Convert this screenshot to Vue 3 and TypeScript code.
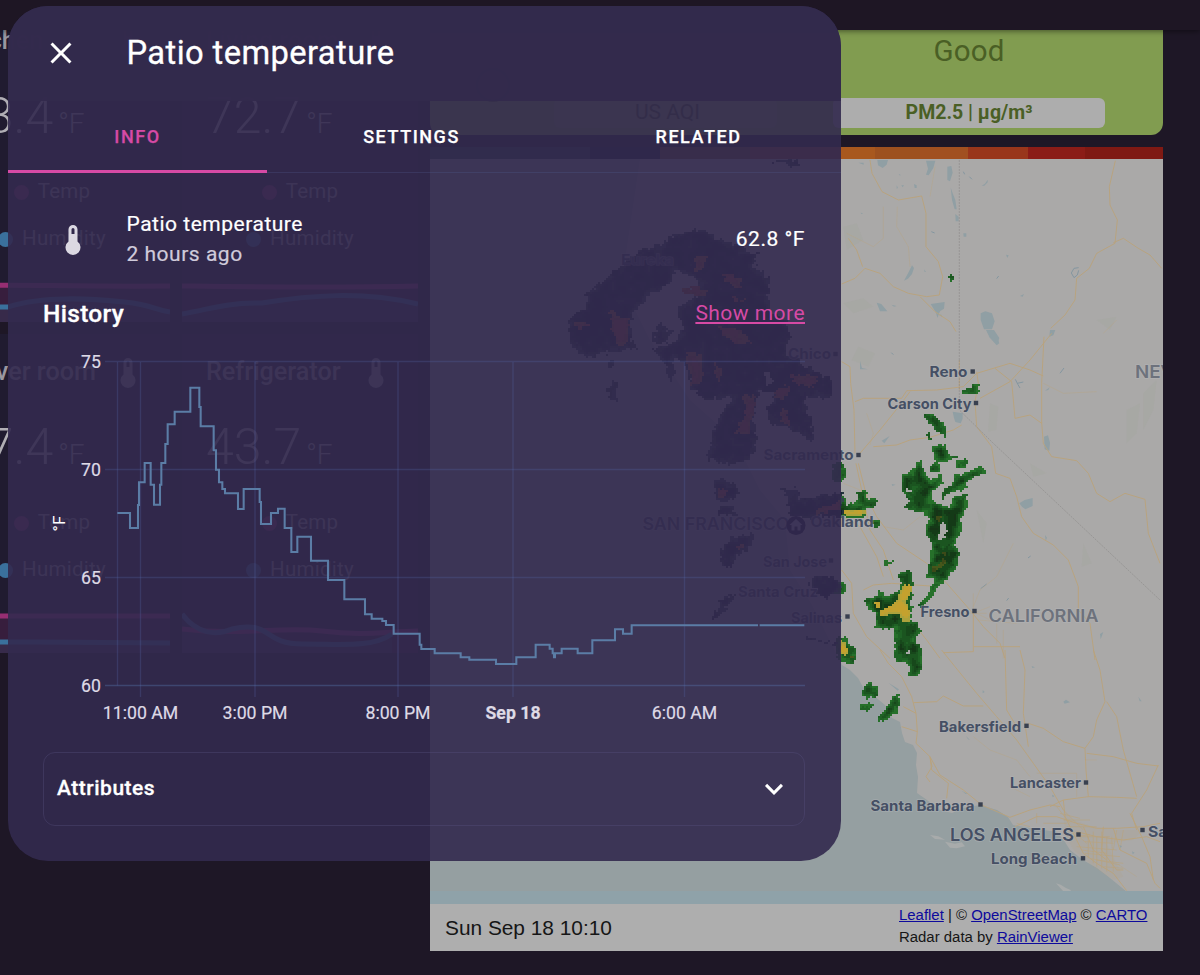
<script setup lang="ts">
type Point = [number, number]

interface Shade {
  fill: string
  d: string
}

interface SensorCard {
  title: string
  value: string
  temp: string
  humidity: string
}

interface Place {
  name: string
  x: number
  y: number
  width: number
  kind?: string
  dot?: Point
}

const cards: SensorCard[] = [
  { title: 'Kitchen', value: '73.4', temp: 'M0 24C60 20 120 24 236 23', humidity: 'M0 44H74C110 32 160 36 190 39S220 47 236 49' },
  { title: 'Living room', value: '72.7', temp: 'M0 23C80 24 150 25 236 23', humidity: 'M0 51C30 46 40 40 80 40C130 32 180 28 236 41' },
  { title: 'Server room', value: '77.4', temp: 'M0 22H236', humidity: 'M0 48C90 48 130 48 236 49' },
  { title: 'Refrigerator', value: '43.7', temp: 'M0 35C60 42 100 32 140 37S200 38 236 37', humidity: 'M0 20C15 40 34 42 50 35C90 26 80 50 120 50C160 50 190 54 210 40' },
]

const tabs = [
  { label: 'Info', active: true },
  { label: 'Settings', active: false },
  { label: 'Related', active: false },
]

const yTicks = [
  { label: '75', y: 362 },
  { label: '70', y: 470 },
  { label: '65', y: 578 },
  { label: '60', y: 686 },
]

const xTicks = [
  { label: '11:00 AM', x: 140.5, bold: false },
  { label: '3:00 PM', x: 255, bold: false },
  { label: '8:00 PM', x: 398, bold: false },
  { label: 'Sep 18', x: 513, bold: true },
  { label: '6:00 AM', x: 684.5, bold: false },
]

const historyLine =
  'M352 504H390V549H414V480H417V412H434V354H452V419H462V479H480V419H484V354H496V297H503V238H524V200H571V128H598V186H602V244H641V316H648V374H657V412H667V432H675V445H714V492H731V432H779V471H783V537H813V504H834V491H854V549H874V621H892V575H933V647H984V705H1033V763H1095V808H1115V821H1147V828H1158V840H1181V866H1259V899H1264V912H1304V925H1382V937H1408V944H1488V957H1549V937H1607V899H1649V911H1658V925H1662V937H1665V925H1685V911H1733V925H1777V886H1845V853H1869V866H1895V841H2274M2279 841H2413'

const places: Place[] = [
  { name: 'Eureka', x: 621, y: 265, width: 53 },
  { name: 'Chico', x: 788, y: 359, width: 43, dot: [835.5, 354] },
  { name: 'Reno', x: 929.5, y: 376.5, width: 38, dot: [972.7, 371.5] },
  { name: 'Carson City', x: 887.5, y: 408.5, width: 84, dot: [976, 403] },
  { name: 'Sacramento', x: 763.5, y: 460, width: 90, dot: [858.5, 455] },
  { name: 'Oakland', x: 810.5, y: 527, width: 63 },
  { name: 'San Jose', x: 763, y: 566.5, width: 64, dot: [831, 560.5] },
  { name: 'Santa Cruz', x: 738, y: 597, width: 80 },
  { name: 'Salinas', x: 791, y: 623, width: 51, dot: [847.5, 616.5] },
  { name: 'Fresno', x: 920.5, y: 616.5, width: 49, dot: [974.5, 611] },
  { name: 'Bakersfield', x: 939, y: 732, width: 82, dot: [1026.5, 725.8] },
  { name: 'Lancaster', x: 1010, y: 787.5, width: 71, dot: [1086, 782.5] },
  { name: 'Santa Barbara', x: 870.5, y: 810.5, width: 104, dot: [980.5, 804.5] },
  { name: 'Long Beach', x: 991, y: 864, width: 86, dot: [1083, 858.3] },
  { name: 'San Bernardino', x: 1148, y: 836.5, width: 118, dot: [1142.5, 830] },
  { name: 'SAN FRANCISCO', x: 642.5, y: 530, width: 147, kind: 'big' },
  { name: 'LOS ANGELES', x: 950, y: 841, width: 124, kind: 'big', dot: [1078.5, 834.5] },
  { name: 'CALIFORNIA', x: 988.5, y: 621.7, width: 110, kind: 'state' },
  { name: 'NEVADA', x: 1135, y: 378, width: 78, kind: 'state' },
]

const CELL = 2

function parse(list: string, ox: number, oy: number): Point[] {
  return list.split(' ').map((pair) => {
    const [x, y] = pair.split(',').map(Number)
    return [ox + x / 3, oy + y / 3] as Point
  })
}

function hash(x: number, y: number): number {
  const n = Math.sin(x * 127.1 + y * 311.7) * 43758.5453
  return n - Math.floor(n)
}

function smooth(x: number, y: number): number {
  const ix = Math.floor(x)
  const iy = Math.floor(y)
  const fx = x - ix
  const fy = y - iy
  const top = hash(ix, iy) * (1 - fx) + hash(ix + 1, iy) * fx
  const bottom = hash(ix, iy + 1) * (1 - fx) + hash(ix + 1, iy + 1) * fx
  return top * (1 - fy) + bottom * fy
}

function inside(poly: Point[], x: number, y: number): boolean {
  let hit = false
  for (let i = 0, j = poly.length - 1; i < poly.length; j = i++) {
    const [xi, yi] = poly[i]
    const [xj, yj] = poly[j]
    if (yi > y !== yj > y && x < ((xj - xi) * (y - yi)) / (yj - yi) + xi) hit = !hit
  }
  return hit
}

function edgeDistance(poly: Point[], x: number, y: number): number {
  let best = Infinity
  for (let i = 0, j = poly.length - 1; i < poly.length; j = i++) {
    const [x1, y1] = poly[j]
    const [x2, y2] = poly[i]
    const dx = x2 - x1
    const dy = y2 - y1
    const t = Math.max(0, Math.min(1, ((x - x1) * dx + (y - y1) * dy) / (dx * dx + dy * dy || 1)))
    best = Math.min(best, Math.hypot(x - x1 - t * dx, y - y1 - t * dy))
  }
  return best
}

// Turns echo outlines into blocky radar cells, darker towards the core.
function radar(polys: Point[][], fills: string[], jitter: number, holes: Point[][] = []): Shade[] {
  const shades: Shade[] = fills.map((fill) => ({ fill, d: '' }))
  for (const poly of polys) {
    const xs = poly.map((p) => p[0])
    const ys = poly.map((p) => p[1])
    const x0 = Math.floor(Math.min(...xs) / CELL) * CELL - 4
    const y0 = Math.floor(Math.min(...ys) / CELL) * CELL - 4
    for (let y = y0; y < Math.max(...ys) + 4; y += CELL) {
      for (let x = x0; x < Math.max(...xs) + 4; x += CELL) {
        const px = x + 1 + (smooth(x / 3, y / 3) - 0.5) * jitter
        const py = y + 1 + (smooth(x / 3 + 40, y / 3 + 9) - 0.5) * jitter
        if (!inside(poly, px, py) || holes.some((h) => inside(h, px, py))) continue
        const depth = Math.min(edgeDistance(poly, px, py), 6) + (smooth(x / 6, y / 6) - 0.4) * 8
        const level = Math.max(0, Math.min(fills.length - 1, Math.floor(depth / 2)))
        shades[level].d += `M${x} ${y}h2v2h-2z`
      }
    }
  }
  return shades
}

const east = (list: string) => parse(list, 830, 330)
const north = (list: string) => parse(list, 420, 0)

const rain = radar(
  [
    '213,440 240,423 272,390 284,430 302,452 330,430 338,462 310,484 300,508 335,526 358,530 370,500 414,488 410,530 395,560 392,600 372,650 390,670 377,715 347,752 320,772 307,802 277,832 263,828 286,800 300,772 316,752 293,744 298,690 303,640 283,600 298,570 278,547 220,534 238,510 211,480',
    '310,343 347,346 352,370 382,378 347,394 314,404',
    '301,406 332,400 328,426 302,428',
    '376,396 414,384 407,414 382,418',
    '331,500 341,475 368,465 373,435 398,430 453,408 465,430 427,442 397,480 365,482 342,503',
    '277,252 309,250 334,275 351,298 346,322 314,294 295,276',
    '290,313 304,310 306,327 292,332',
    '395,182 425,176 425,163 444,163 444,193 398,193',
    '160,690 190,692 186,706 166,704',
    '0,498 42,498 50,523 83,518 83,486 107,482 112,506 149,508 132,532 102,542 108,562 60,564 0,557',
    '126,566 156,580 136,596',
    '203,733 242,718 247,790 242,870 264,876 274,905 257,930 274,950 275,1020 264,1036 233,1036 240,1010 213,994 198,988 193,935 196,897 160,894 133,894 138,852 116,840 106,810 133,798 150,780 167,798 200,788 213,762',
    '20,918 50,928 62,953 76,955 74,995 50,1004 20,987',
    '118,1056 142,1073 142,1102 112,1108 95,1087 102,1068',
    '91,1123 134,1116 112,1142 93,1142',
    '191,1093 210,1088 204,1145 167,1172 148,1175 151,1145 178,1122',
    '10,398 42,398 49,430 40,454 10,452',
    '10,758 40,758 48,778 38,792 10,792',
    '353,-168 366,-168 371,-150 360,-148',
  ].map(east),
  ['#26702a', '#1f6225', '#1b5520', '#17481b', '#143a17', '#163417'],
  3.6,
  [east('325,600 345,575 352,600 340,632 328,626'), east('228,478 246,474 246,490 232,490'), east('230,965 240,962 240,972 232,974')],
)

const heavy = radar(
  [
    '222,763 245,766 238,800 227,815 242,850 238,877 214,874 208,852 153,858 148,840 188,823 203,808 213,780',
    '133,814 154,820 152,834 136,832',
    '0,538 108,540 104,554 0,556',
    '30,930 46,940 58,970 42,982 28,962',
  ].map(east),
  ['#aba23c', '#bda232', '#c4a12e'],
  2,
)

const cores = radar(
  ['303,718 325,700 343,688 354,698 330,710 310,728', '316,558 334,562 328,576', '328,662 354,668 344,676', '58,973 70,978 62,988'].map(east),
  ['#46571b', '#3c4a18'],
  4,
)

const coastRain = radar(
  [
    '600,800 660,750 720,735 745,715 800,700 850,685 890,715 960,740 1015,765 1000,800 1050,835 1045,890 1050,940 1100,960 1110,1010 1100,1060 1180,1110 1240,1140 1235,1190 1180,1190 1150,1190 1180,1280 1182,1328 1120,1290 1060,1275 1042,1240 1060,1180 1020,1170 1000,1250 1010,1300 1000,1370 930,1395 865,1375 880,1290 900,1240 950,1190 860,1200 820,1170 790,1080 760,1075 765,1130 750,1150 735,1100 700,1050 770,1020 790,980 770,920 840,890 830,840 770,810 740,870 690,880 680,900 640,940 630,1010 650,1045 550,1060 500,1075 455,1035 445,975 460,940 495,930 500,880 560,830',
    '720,970 760,1000 730,1030 690,1020',
    '560,1080 588,1085 585,1105 565,1100',
    '580,1140 590,1150 590,1195 600,1205 565,1195 570,1165',
    '885,1445 905,1435 952,1455 950,1490 915,1505 885,1490',
    '900,1520 945,1515 950,1545 895,1545',
    '905,1650 930,1615 1005,1598 985,1650 945,1670 930,1708 905,1700',
    '1070,1465 1120,1475 1130,1460 1145,1500 1200,1490 1265,1480 1265,1550 1200,1550 1140,1555 1110,1540 1105,1490',
    '1165,1750 1185,1725 1250,1735 1265,1760 1220,1800 1190,1770',
    '875,1860 900,1805 945,1780 935,1810 905,1835 885,1860',
    '1140,1910 1250,1930 1250,1936 1150,1916',
    '1060,480 1140,480 1135,498 1105,498 1060,486',
  ].map(north),
  ['#33474c', '#22343c', '#182834', '#12202e', '#0e1a2a'],
  6,
  [north('1035,1125 1050,1110 1060,1140 1045,1160'), north('720,860 750,850 745,880 725,885'), north('655,990 675,970 680,1010 660,1020')],
)

const coastHeavy = radar(
  [
    '820,770 860,770 850,805 830,810',
    '905,820 960,835 965,870 920,850',
    '780,870 830,860 880,875 820,890',
    '570,920 590,950 630,960 620,1035 590,1035 575,980',
    '460,960 510,970 480,995',
    '890,980 950,985 1000,1030 940,1030',
    '800,1060 850,1065 840,1160 815,1150',
    '880,1090 905,1115 900,1150 885,1130',
    '970,1180 1005,1190 1000,1240 990,1300 940,1305 975,1250',
    '1060,1175 1110,1155 1110,1190 1070,1200',
    '1110,1125 1200,1130 1180,1160 1120,1150',
    '890,1470 925,1465 915,1490 895,1485',
    '945,1640 970,1630 960,1650',
    '1185,1535 1260,1500 1260,1530 1190,1545',
    '1080,1230 1100,1225 1110,1280 1090,1270',
    '935,890 990,905 950,905',
  ].map(north),
  ['#a8642c', '#a05030', '#b04a34'],
  5,
)

const layers = [rain, cores, heavy, coastRain, coastHeavy].flat()
</script>

<template>
  <div class="screen">
    <div class="board">
      <section class="cards">
        <article v-for="card in cards" :key="card.title" class="card">
          <header class="card-head">
            <span>{{ card.title }}</span>
            <svg class="card-icon" viewBox="0 0 24 24">
              <path d="M15 13V5A3 3 0 0 0 9 5V13A5 5 0 1 0 15 13M12 4A1 1 0 0 1 13 5V8H11V5A1 1 0 0 1 12 4Z" />
            </svg>
          </header>
          <div class="card-value">{{ card.value }}<small>°F</small></div>
          <div class="legend"><i class="dot pink"></i>Temp</div>
          <div class="legend"><i class="dot blue"></i>Humidity</div>
          <svg class="spark" viewBox="0 0 236 59">
            <path :d="card.temp + 'V59H0Z'" class="area-pink" />
            <path :d="card.humidity + 'V59H0Z'" class="area-blue" />
            <path :d="card.temp" class="line-pink" />
            <path :d="card.humidity" class="line-blue" />
          </svg>
        </article>
      </section>

      <section class="right">
        <article class="air">
          <svg class="gauge" viewBox="0 0 40 40"><circle cx="20" cy="20" r="16" /></svg>
          <div class="air-status">Good</div>
          <div class="air-index">US AQI</div>
          <div class="air-unit">PM2.5 | µg/m³</div>
        </article>

        <article class="radar">
          <div class="scale"></div>
          <svg class="map" viewBox="430 159 733 732">
            <rect x="430" y="159" width="733" height="732" class="land" />
            <path
              class="sea"
              d="M430 159H640L625 260L630 300L650 340L690 400L735 440L760 490L785 520L790 570L812 605L842 665L850 670L858 678L863 687L873 695L885 705L892 718L900 722L902 733L905 742L913 745L917 753L916 765L918 777L917 793L927 800L940 810L952 813L963 808L980 805L997 810L1008 817L1013 825L1030 828L1057 832L1065 842L1070 850L1083 860L1097 868L1110 878L1127 892H430Z"
            />
            <g transform="translate(830 0) scale(.33333)">
              <path class="park" d="M40 680l40 -10 20 50 -50 30zM40 910l60 -15 30 25 -60 20zM800 960l60 -10 -20 40z" />
              <path
                class="lake"
                d="M142 480h32l-4 14 -12 10 -14 -8zM288 482h28l-6 22 -14 22 -8 -2 6 -18zM352 500l12 -2 4 20 -8 26 -8 -4zM362 562l6 18 8 20 4 28h-6l-8 -28zM376 642l10 8v14h-9zM246 796l6 8 -6 18 -12 14 -12 6 14 -26zM140 908l14 4 18 22 -22 0zM302 912l42 -6 -2 20 -12 8 -8 20 -4 -16zM452 940l14 -6 20 6 8 24 -8 24h-24l-10 -28zM470 990l30 15 8 25 -8 6 -22 -24zM400 700l9 0v10h-8zM252 552l8 4v8h-6zM570 888l12 -6 -4 8zM528 764l8 2 -4 8zM455 557l10 -6 8 -12v8l-10 10zM85 488h16v6zM206 522l8 4 -6 0zM200 556l4 8 -4 2zM214 556l8 0 -4 6zM92 638l8 2 -6 2zM184 914l16 4 -8 2zM322 942l12 2 4 8zM282 808l6 8 -4 0z"
              />
              <path class="lake-line" d="M746 803l-14 2 -8 14 8 14 10 -8 4 -14M400 515l4 8M418 530l8 8M500 836l6 -8M304 695l10 4" />
              <path
                class="road"
                d="M120 480L126 520 156 575 205 600 275 588 288 640V740L325 785 338 830 328 885 290 890 235 880 190 860 150 820 105 805 75 835 35 852M55 715L80 750 98 800M270 890L315 935 360 965 378 995M856 482L838 560 840 615 862 660 855 730 800 760 778 805 740 835 735 900 705 945 662 985M850 728L880 715 925 745 960 765 995 805"
              />
              <path class="road faint" d="M160 620V715L130 740 50 700M315 500L300 590M202 620L200 680 235 740 240 800M860 960L820 1000" />
              <path class="border" d="M388 480V1080" />
            </g>
            <g transform="translate(830 330) scale(.33333)">
              <path
                class="park"
                d="M480 220l25 10 -6 70 -25 5zM890 240l40 -20 -10 90 -30 30zM940 190l40 -40 -10 90 -30 60zM85 50l50 20 -20 40 -50 -20zM600 400l50 30 -40 10zM760 640l25 60 -30 10zM440 540l30 40 -10 60z"
              />
              <path
                class="lake"
                d="M468 0h24l16 24 -4 12 -30 -24zM660 0h16l-6 16 -12 4zM368 245l30 5v16l-6 14 -16 -4 -4 -12zM642 320l12 -4 6 22 -2 24 -14 -4zM568 520l16 -10 24 -6v24l-22 10 -10 -8zM155 332l24 -14 -16 22zM645 182l14 -10 -4 8zM645 615l6 8 -4 10zM810 912l10 -6 -8 22zM90 92l6 22 18 4 -24 0zM185 462l12 2 -10 4z"
              />
              <path class="lake-line" d="M556 148l8 16 6 10M562 160l18 -4M690 130l12 -16M452 776l18 -14M530 812l6 -8M594 684l8 -6M184 68l6 6" />
              <path
                class="road"
                d="M388 90V180M35 95L60 110 62 160 72 240 75 370M75 215L100 205 215 205 230 182 320 180 400 170 440 130 540 100 600 120 640 138M90 370L150 300 210 225 240 185M130 350L200 345 240 330 300 322 370 300 395 285M440 125L445 160 435 215 440 290 485 350 497 430 540 445 560 500 575 560 610 610 670 645 715 690 745 770V840L780 880 795 990M450 205L540 155 600 90 665 10M495 115L545 155 555 265 600 255 635 280V160L642 20M635 278L640 340 665 380 740 392 775 430 800 490 840 515 885 490 945 508 955 610 990 700M85 400L110 500 140 560 200 640 290 700 350 760 420 840 460 890 510 940 525 985M78 400L95 480 120 600 160 660 190 750M100 780L130 765 185 760 300 768M430 850V965L340 968M432 950H570M250 880L290 930 330 985M35 720L65 760 70 850 110 920 180 985M40 560L90 590 140 680 160 740"
              />
              <path class="road faint" d="M110 250L130 310 120 345M40 460L90 480 150 520M160 590L220 600 270 560M550 640L500 740 450 780 430 830M440 850L480 870M640 160L700 190 800 185M445 870L560 880M430 790V850L480 830M500 880V940M520 900V985M400 850H470" />
              <path class="border" d="M388 90V240L490 340 990 810" />
            </g>
            <g transform="translate(830 650) scale(.33333)">
              <path class="island" d="M300 555l25 4 20 10 -30 -2zM345 575l30 6 20 -4 10 12 -25 6 -20 -2zM678 700l14 4 16 10 14 6v6l-20 0z" />
              <path class="city" d="M700 480l30 30 60 20 60 10 90 0 -30 30 -80 10 30 60 20 40 -30 10 -60 -40 -60 -50 -25 -45z" />
              <path
                class="road"
                d="M150 0L175 40 215 80 245 140 258 190 262 245 258 280 300 320 305 360 355 400 350 445M300 320L330 375 400 420 455 465 540 502 600 480 660 465 690 470M300 320L306 350 288 380 300 396M258 190L220 170M262 245L215 230M250 158L320 155 340 138 400 168H460M335 0L375 50 440 130 500 200 560 270 610 340 660 410 700 480M525 0L530 180 560 230M570 0L585 60 580 190 595 290M595 220L640 235 700 275 765 295 790 260 800 210 825 155 810 60 790 0M765 295L768 360 775 440 700 450 660 470M770 310L850 320 920 340 985 348M830 155L860 200 880 300 900 370 920 440M985 345L950 420 905 490 920 540M775 440L860 442 920 445M555 530L620 500 680 500 740 520 800 535 860 535 940 530 990 520M700 450L705 500 735 560 760 610 800 640 850 670 890 722M740 545L800 560 880 570 950 560 990 575M760 530L790 600 830 630M820 530L815 600 860 660 880 660M850 535L870 600 950 640 975 700 990 715M900 490L935 560 960 620 970 690"
              />
              <path
                class="road street"
                d="M700 480L760 540M640 520L710 520M720 560L780 555M740 590L860 600M780 625L870 645M800 560V650M845 560L850 665M680 470L720 520M690 490L750 505M700 510H780M710 530H800M730 545L770 580M750 560H840M765 575L850 580M755 600L830 610M775 560V625M790 545V640M815 545V655M830 560V665M765 610L870 620M800 630L880 640M820 650L880 655M860 540L850 600M880 540L870 600M620 490V520M600 530L560 520"
              />
              <path class="road faint" d="M620 370H740V440M765 330H800M480 300L560 330 600 380M860 640L920 680M540 410L600 440M430 260L480 300" />
              <path class="lake" d="M700 155l8 -6 12 8 -16 4zM458 120l6 6 -6 4zM925 140l10 14 -6 0zM175 98l32 20 -4 4zM605 48l10 4 -8 2zM408 258l12 12 -6 -2zM906 604l8 4 -6 5zM666 434l8 4 -6 4zM868 586l8 2 -4 6zM395 422l18 10 -6 0z" />
            </g>
            <g shape-rendering="crispEdges">
              <path v-for="(layer, i) in layers" :key="i" :d="layer.d" :fill="layer.fill" />
            </g>
            <g v-for="place in places" :key="place.name">
              <text
                :x="place.x"
                :y="place.y"
                :textLength="place.width"
                lengthAdjust="spacingAndGlyphs"
                class="place"
                :class="place.kind"
              >{{ place.name }}</text>
              <rect v-if="place.dot" :x="place.dot[0] - 2.2" :y="place.dot[1] - 2.2" width="4.4" height="4.4" class="place-dot" />
            </g>
            <circle cx="796" cy="525.5" r="9.5" class="home-disc" />
            <path d="M796 519l-6.500 6h2v5.500h3v-4h3v4h3v-5.500h2z" class="home" />
          </svg>
          <div class="map-edge"></div>
          <footer class="map-foot">
            <span class="stamp">Sun Sep 18 10:10</span>
            <div class="credits">
              <div><a>Leaflet</a> | © <a>OpenStreetMap</a> © <a>CARTO</a></div>
              <div>Radar data by <a>RainViewer</a></div>
            </div>
          </footer>
        </article>
      </section>
    </div>

    <div class="appbar"></div>

    <div class="dialog" role="dialog">
      <header class="dialog-head">
        <svg class="close" viewBox="0 0 24 24">
          <path d="M19 6.410L17.590 5L12 10.590L6.410 5L5 6.410L10.590 12L5 17.590L6.410 19L12 13.410L17.590 19L19 17.590L13.410 12L19 6.410Z" />
        </svg>
        <h1>Patio temperature</h1>
      </header>
      <nav class="tabs">
        <button v-for="tab in tabs" :key="tab.label" class="tab" :class="{ active: tab.active }">{{ tab.label }}</button>
      </nav>
      <div class="body">
        <div class="state">
          <svg class="state-icon" viewBox="0 0 24 24">
            <path d="M15 13V5A3 3 0 0 0 9 5V13A5 5 0 1 0 15 13M12 4A1 1 0 0 1 13 5V8H11V5A1 1 0 0 1 12 4Z" />
          </svg>
          <div class="state-text">
            <div>Patio temperature</div>
            <div class="ago">2 hours ago</div>
          </div>
          <div class="reading">62.8 °F</div>
        </div>
        <div class="history-head">
          <h2>History</h2>
          <a class="more">Show more</a>
        </div>
        <svg class="chart" viewBox="43 345 762 385">
          <g class="grid">
            <path d="M117.500 362V685.500" />
            <path v-for="t in xTicks" :key="t.label" :d="`M${t.x} 362V697`" />
            <path v-for="t in yTicks" :key="t.label" :d="`M105 ${t.y - 0.500}H805`" :class="{ base: t.label === '60' }" />
          </g>
          <text v-for="t in yTicks" :key="t.label" x="101" :y="t.y + 6" class="tick end">{{ t.label }}</text>
          <text v-for="t in xTicks" :key="t.label" :x="t.x" y="719" class="tick mid" :class="{ bold: t.bold }">{{ t.label }}</text>
          <text transform="translate(65 523.500) rotate(-90)" class="unit">°F</text>
          <path :d="historyLine" transform="translate(0 345) scale(.33333)" class="history-line" />
        </svg>
        <div class="attributes">
          <span>Attributes</span>
          <svg class="chevron" viewBox="0 0 24 24"><path d="M7.410 8.580L12 13.170L16.590 8.580L18 10L12 16L6 10L7.410 8.580Z" /></svg>
        </div>
      </div>
    </div>
  </div>
</template>

<style>
body {
  margin: 0;
  background: #1e1726;
}
</style>

<style scoped>
.screen {
  position: relative;
  width: 1200px;
  height: 975px;
  overflow: hidden;
  background: #1e1726;
  font-family: Roboto, sans-serif;
}
.board {
  display: flex;
  gap: 12px;
  margin-left: -66px;
  padding-top: 3px;
}
.cards {
  display: grid;
  grid-template-columns: 236px 236px;
  grid-auto-rows: 319px;
  gap: 12px;
  align-content: start;
  flex: none;
}
.card {
  display: flex;
  flex-direction: column;
  background: #201b30;
  color: #9a97a0;
  overflow: hidden;
}
.card-head {
  display: flex;
  justify-content: space-between;
  align-items: center;
  height: 28px;
  padding: 23px 24px 0;
  font-size: 25.200px;
  font-weight: 500;
  white-space: nowrap;
}
.card-icon {
  width: 36px;
  height: 36px;
  margin-top: 4px;
  fill: currentColor;
}
.card-value {
  height: 63px;
  padding: 28px 24px 0;
  margin-top: 4px;
  font-size: 50px;
  line-height: 60px;
  font-weight: 300;
  color: #b0aeb4;
}
.card-value small {
  margin-left: 5px;
  font-size: 28px;
}
.legend {
  display: flex;
  justify-content: center;
  align-items: center;
  gap: 9px;
  height: 47px;
  font-size: 20.500px;
  letter-spacing: 0.25px;
}
.legend:nth-of-type(2) {
  margin-top: 18px;
}
.dot {
  width: 15px;
  height: 15px;
  margin-top: 3px;
  border-radius: 50%;
}
.dot.pink {
  background: #7e2a62;
}
.dot.blue {
  background: #3a709c;
}
.spark {
  display: block;
  width: 236px;
  height: 59px;
  margin-top: auto;
}
.line-pink,
.line-blue {
  fill: none;
  stroke-width: 5;
}
.line-pink {
  stroke: #962e72;
}
.line-blue {
  stroke: #3a709c;
}
.area-pink {
  fill: #962e72;
  opacity: 0.2;
}
.area-blue {
  fill: #3a709c;
  opacity: 0.15;
}
.right {
  width: 733px;
  flex: none;
}
.air {
  display: grid;
  grid-template-columns: 124px 223px 56px 272px;
  grid-template-rows: 95px 30px;
  height: 132px;
  border-radius: 0 0 12px 12px;
  background: #819c50;
  color: #4a5f25;
  text-align: center;
}
.gauge {
  width: 40px;
  height: 40px;
  margin: 62px 0 0 43px;
  fill: none;
  stroke: #4a5f25;
  stroke-width: 2;
}
.air-status {
  grid-column: 4;
  grid-row: 1;
  padding-top: 30px;
  font-size: 29.500px;
  line-height: 36px;
  letter-spacing: 0.1px;
}
.air-index,
.air-unit {
  grid-row: 2;
  border-radius: 6px;
}
.air-index {
  grid-column: 2;
  padding-left: 4px;
  background: #869c60;
  color: #3a4c1c;
  font-size: 21px;
  line-height: 29px;
}
.air-unit {
  grid-column: 4;
  background: #adadad;
  font-size: 19.500px;
  font-weight: 700;
  line-height: 29px;
}
.radar {
  margin-top: 12px;
  background: #aeaeae;
}
.scale {
  height: 12px;
  background: linear-gradient(
    90deg,
    #28463e 0 90px,
    #223c40 90px 160px,
    #10182c 160px 230px,
    #705030 230px 320px,
    #86402c 320px 411px,
    #a8581e 411px 445px,
    #9d511f 445px 490px,
    #a15020 490px 538px,
    #99361b 538px 598px,
    #8b1c17 598px 655px,
    #7f1913 655px
  );
}
.map {
  display: block;
  width: 733px;
  height: 732px;
}
.land {
  fill: #aaa9a8;
}
.sea {
  fill: #959fa1;
}
.park {
  fill: #a1a49a;
  opacity: 0.3;
}
.lake {
  fill: #909fa4;
}
.lake-line {
  fill: none;
  stroke: #8496a0;
  stroke-width: 3;
}
.island {
  fill: #a8abab;
}
.city {
  fill: #b7a27c;
  opacity: 0.15;
}
.road {
  fill: none;
  stroke: #b9a27c;
  stroke-width: 2.800;
  stroke-linejoin: round;
}
.street {
  stroke-width: 1.800;
}
.faint {
  opacity: 0.4;
}
.border {
  fill: none;
  stroke: #8e8c8b;
  stroke-width: 2;
  stroke-dasharray: 6 3;
}
.place {
  font-family: Inter, sans-serif;
  font-size: 14.500px;
  font-weight: 700;
  fill: #454f64;
  stroke: rgba(180, 182, 186, 0.5);
  stroke-width: 1.500px;
  paint-order: stroke;
}
.place.big {
  font-size: 17.500px;
  font-weight: 600;
}
.place.state {
  font-size: 17.500px;
  font-weight: 600;
  fill: #6d727c;
}
.place-dot {
  fill: #39404f;
}
.home-disc {
  fill: #0d0f2c;
}
.home {
  fill: #a0a0b0;
}
.map-edge {
  height: 13px;
  background: #8fa2a9;
}
.map-foot {
  display: flex;
  justify-content: space-between;
  height: 47px;
  padding: 0 15px;
  color: #161616;
  font-family: 'Liberation Sans', Arial, sans-serif;
}
.stamp {
  font-size: 20.850px;
  line-height: 48px;
}
.credits {
  width: 249px;
  font-size: 14.930px;
  line-height: 22px;
  white-space: nowrap;
}
.credits a {
  color: #0d0a9c;
  text-decoration: underline;
}
.appbar {
  position: absolute;
  inset: 0 0 auto;
  height: 30px;
  background: #1e1624;
  box-shadow: 0 1px 6px rgba(0, 0, 0, 0.5);
}
.dialog {
  position: absolute;
  left: 8px;
  top: 6px;
  width: 833px;
  height: 855px;
  border-radius: 40px;
  overflow: hidden;
  background: rgba(51, 42, 78, 0.905);
  color: #fff;
}
.dialog-head {
  display: flex;
  align-items: center;
  height: 95px;
  box-sizing: border-box;
  padding: 0 0 2px 35px;
  background: rgba(51, 42, 76, 0.97);
}
.close {
  width: 36px;
  height: 36px;
  margin-top: 1px;
  fill: #fff;
}
h1 {
  margin: 0 0 0 47.500px;
  font-size: 32.700px;
  font-weight: 400;
  letter-spacing: 0.0125em;
  -webkit-text-stroke: 0.3px currentColor;
}
.tabs {
  display: grid;
  grid-template-columns: 259px 289px 285px;
  height: 72px;
  box-sizing: border-box;
  border-bottom: 1px solid rgba(80, 90, 140, 0.3);
}
.tab {
  height: 72px;
  box-sizing: border-box;
  padding: 2px 0 0;
  border: 0;
  border-bottom: 3px solid transparent;
  background: none;
  color: #fff;
  font: 500 18px/66px Roboto, sans-serif;
  letter-spacing: 1.550px;
  text-transform: uppercase;
  -webkit-text-stroke: 0.25px currentColor;
}
.tab.active {
  border-bottom-color: #d64aa5;
  color: #d64aa5;
}
.body {
  padding: 36px 36px 0 35px;
  font-size: 21px;
  letter-spacing: 0.0245em;
}
.state {
  display: flex;
  align-items: center;
  height: 60px;
  -webkit-text-stroke: 0.2px currentColor;
}
.state-icon {
  width: 36px;
  height: 36px;
  margin: 1px 0 0 12px;
  fill: #dbd8e2;
}
.state-text {
  flex: 1;
  margin-left: 35.500px;
  line-height: 30px;
}
.ago {
  color: #d0cbdb;
}
.history-head {
  display: flex;
  justify-content: space-between;
  align-items: center;
  height: 36px;
  margin-top: 26px;
}
h2 {
  margin: 0;
  font-size: 24.500px;
  font-weight: 500;
  letter-spacing: 0.3px;
  -webkit-text-stroke: 0.3px currentColor;
}
.more {
  color: #d64aa5;
  letter-spacing: 0.022em;
  text-decoration: underline;
}
.chart {
  display: block;
  width: 762px;
  height: 385px;
  margin-top: 14px;
  overflow: visible;
  letter-spacing: 0;
}
.grid path {
  fill: none;
  stroke: rgba(84, 104, 170, 0.27);
  stroke-width: 1.400;
}
.grid .base {
  stroke: rgba(84, 114, 170, 0.4);
}
.tick {
  font-size: 17.700px;
  fill: #dedae6;
  stroke: #dedae6;
  stroke-width: 0.200px;
}
.end {
  text-anchor: end;
}
.mid {
  text-anchor: middle;
}
.bold {
  font-weight: 700;
}
.unit {
  font-size: 17px;
  text-anchor: middle;
  fill: #fff;
}
.history-line {
  fill: none;
  stroke: #5b7da6;
  stroke-width: 6.200;
}
.attributes {
  display: flex;
  justify-content: space-between;
  align-items: center;
  height: 74px;
  box-sizing: border-box;
  margin-top: 22px;
  padding: 0 12px 2px 13px;
  border: 1px solid rgba(90, 84, 130, 0.35);
  border-radius: 12px;
  font-weight: 500;
  -webkit-text-stroke: 0.3px currentColor;
}
.chevron {
  width: 36px;
  height: 36px;
  margin-top: 2px;
  fill: #fff;
}
</style>
